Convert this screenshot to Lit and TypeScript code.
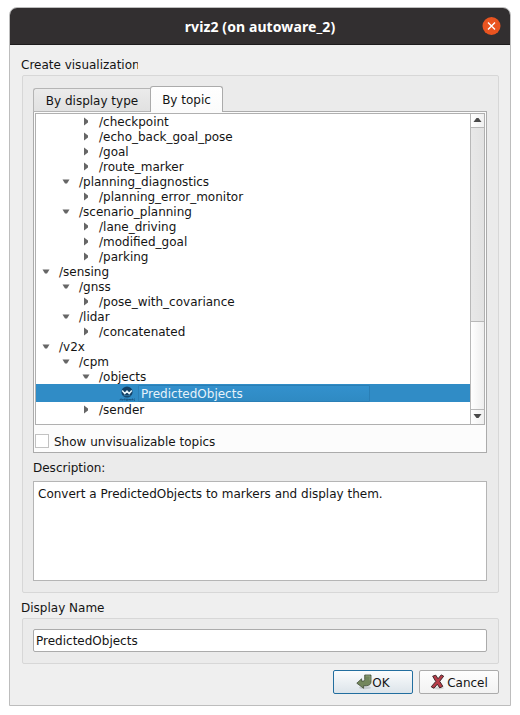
import { LitElement, html, css, svg } from "lit";
import { customElement, property, state } from "lit/decorators.js";
import { classMap } from "lit/directives/class-map.js";

type Node = { label: string; depth: number; kind: "open" | "closed" | "leaf" };

const NODES: Node[] = [
  { label: "/checkpoint", depth: 2, kind: "closed" },
  { label: "/echo_back_goal_pose", depth: 2, kind: "closed" },
  { label: "/goal", depth: 2, kind: "closed" },
  { label: "/route_marker", depth: 2, kind: "closed" },
  { label: "/planning_diagnostics", depth: 1, kind: "open" },
  { label: "/planning_error_monitor", depth: 2, kind: "closed" },
  { label: "/scenario_planning", depth: 1, kind: "open" },
  { label: "/lane_driving", depth: 2, kind: "closed" },
  { label: "/modified_goal", depth: 2, kind: "closed" },
  { label: "/parking", depth: 2, kind: "closed" },
  { label: "/sensing", depth: 0, kind: "open" },
  { label: "/gnss", depth: 1, kind: "open" },
  { label: "/pose_with_covariance", depth: 2, kind: "closed" },
  { label: "/lidar", depth: 1, kind: "open" },
  { label: "/concatenated", depth: 2, kind: "closed" },
  { label: "/v2x", depth: 0, kind: "open" },
  { label: "/cpm", depth: 1, kind: "open" },
  { label: "/objects", depth: 2, kind: "open" },
  { label: "PredictedObjects", depth: 3, kind: "leaf" },
  { label: "/sender", depth: 2, kind: "closed" },
];

@customElement("topic-row")
export class TopicRow extends LitElement {
  @property({ attribute: false }) node!: Node;

  static styles = css`
    :host { display: block; }
    .row { display: flex; align-items: center; height: 15px; line-height: 15px; white-space: pre; }
    .arrow { flex: none; width: 20px; height: 15px; margin-right: 3px; }
    .label { padding-top: 2px; }
    .leaf { height: 18px; line-height: 18px; background: #308cc6; color: #e6f2fa; }
    .logo { flex: none; width: 16px; height: 16px; margin: 2px 3px 0 23px; }
    .current { box-sizing: border-box; width: 232px; height: 17px; margin-top: 1px; line-height: 16px; padding-left: 2px;
      border: 1px solid #2a7fb6; border-radius: 1px; background: linear-gradient(#3391cd, #2f8ac3); }
  `;

  render() {
    const n = this.node;
    const indent = `padding-left:${n.depth * 20}px`;
    if (n.kind === "leaf") {
      return html`<div class="row leaf" style=${indent}>
        <svg class="logo" viewBox="0 0 16 16">
          <circle cx="8" cy="6" r="5.6" fill="#123f64" />
          <path d="M3.2 4.6 5.8 7.6 8 5.2 10.2 7.6 12.8 4.6" fill="none" stroke="#e4f5fb" stroke-width="1.5" />
          <path d="M4.5 9.7h7" stroke="#2d78a7" stroke-width="1" />
          <path d="M.5 14.3 2 12.7v1.8M3 13v1h1.2v-1M5 13h1.5M5.8 13v1.5M7.2 13.2h1.5v1.1H7.2zM9.5 13l.6 1.3.7-1.3.7 1.3.6-1.3M13 14.4V13h1v1.4M15 13h.9M15 14.4h.9" fill="none" stroke="#174f78" stroke-width=".8" />
        </svg>
        <div class="current">${n.label}</div>
      </div>`;
    }
    return html`<div class="row" style=${indent}>
      <svg class="arrow" viewBox="0 0 20 15">
        ${n.kind === "open"
          ? svg`<path d="M6.5 5.5h7l-2.5 4H9z" fill="#666" />`
          : svg`<path d="M8 3.5v8l4-3v-2z" fill="#666" />`}
      </svg><span class="label">${n.label}</span>
    </div>`;
  }
}

@customElement("app-root")
export class AppRoot extends LitElement {
  @state() private tab = 1;

  static styles = css`
    :host { display: block; width: 520px; height: 715px; box-sizing: border-box; padding: 7px 9px 9px; background: #fff;
      font: 12px/15px "DejaVu Sans", sans-serif; color: #141414; overflow: hidden; }
    * { box-sizing: border-box; }
    .window { width: 502px; height: 699px; border: 1px solid #bdbdbd; border-radius: 8px 8px 0 0; background: #efefef;
      display: flex; flex-direction: column; overflow: hidden; }
    .title { flex: none; height: 37px; background: #322f30; border-bottom: 1px solid #1d1b1c; display: grid;
      grid-template-columns: 28px 1fr 28px; align-items: center; text-align: center; color: #fff; }
    .title span { grid-column: 2; font: 700 14px/20px "Noto Sans", sans-serif; letter-spacing: .1px; white-space: pre; margin-top: 1px; }
    .title svg { width: 19px; height: 19px; }
    .body { flex: 1; display: flex; flex-direction: column; padding: 13px 11px 11px 11px; }
    .heading { height: 15px; flex: none; }
    .heading.clip { width: 117px; overflow: hidden; white-space: nowrap; }
    .group { margin-left: 1px; border: 1px solid #d7d7d7; border-radius: 2px; background: #ebebeb; padding: 0 11px 0 10px; }
    .main { height: 518px; margin-top: 2px; padding-top: 10px; flex: none; }
    .tabs { display: flex; align-items: flex-end; height: 26px; margin-bottom: -1px; position: relative; }
    .tab { height: 24px; width: 117px; border: 1px solid #b5b5b5; border-right: 0; border-radius: 3px 0 0 0; padding-top: 5px;
      background: linear-gradient(#ebebeb, #e1e1e1); text-align: center; white-space: nowrap; }
    .tab.active { height: 26px; width: 73px; background: linear-gradient(#fff, #fbfbfb); border: 1px solid #ababab;
      border-bottom: 0; border-radius: 3px 3px 0 0; padding-top: 6px; }
    .pane { height: 342px; border: 1px solid #ababab; background: #fcfcfc; padding: 1px; }
    .tree { height: 312px; width: 450px; border: 1px solid #b0b0b0; background: #fff; display: flex; }
    .rows { flex: 1; min-width: 0; overflow: hidden; }
    .bar { width: 14px; flex: none; display: flex; flex-direction: column; border-left: 1px solid #b8b8b8; }
    .step { height: 14px; background: linear-gradient(90deg, #fff, #f0f0f0); display: block; width: 13px; }
    .step.up { height: 13px; }
    .thumb { height: 195px; border: solid #b8b8b8; border-width: 1px 0; background: linear-gradient(90deg, #e8e8e8, #e2e2e2); }
    .groove { flex: 1; border-bottom: 1px solid #b8b8b8; background: linear-gradient(90deg, #fff, #eee); }
    .check { display: flex; align-items: center; gap: 5px; height: 14px; margin-top: 9px; white-space: nowrap; }
    .check span { padding-top: 2px; }
    .box { width: 14px; height: 14px; border: 1px solid #c2c2c2; background: #fff; }
    .desc { height: 15px; margin-top: 8px; }
    .text { height: 100px; margin-top: 5px; border: 1px solid #b5b5b5; background: #fff; padding: 5px 4px; white-space: nowrap; }
    .name { margin-top: 8px; }
    .small { height: 46px; margin-top: 2px; padding-top: 10px; flex: none; }
    .input { height: 23px; border: 1px solid #ababab; border-radius: 2px; background: #fff; padding: 4px 2px; }
    .buttons { display: flex; justify-content: flex-end; gap: 6px; margin-top: 6px; }
    .button { width: 80px; height: 24px; display: flex; align-items: center; justify-content: center;
      border: 1px solid #ababab; border-radius: 2px; background: linear-gradient(#fdfdfd, #f2f2f2); }
    .button span { padding-top: 2px; }
    .button.ok { border-color: #226e9f; background: linear-gradient(#fbfcfd, #dce4ea); }
    .button svg { width: 16px; height: 16px; flex: none; }
    .cancel svg { margin-right: 1px; }
  `;

  render() {
    return html`
      <div class="window">
        <div class="title">
          <span>rviz2 (on autoware_2)</span>
          <svg viewBox="0 0 19 19"><circle cx="9.5" cy="9" r="9" fill="#e95420" />
            <path d="M6 5.5l7 7M13 5.5l-7 7" stroke="#fff" stroke-width="1.4" /></svg>
        </div>
        <div class="body">
          <div class="heading clip">Create visualization</div>
          <div class="group main">
            <div class="tabs">
              ${["By display type", "By topic"].map((t, i) => html`
                <div class=${classMap({ tab: true, active: this.tab === i })} @click=${() => (this.tab = i)}>${t}</div>`)}
            </div>
            <div class="pane">
              <div class="tree">
                <div class="rows">${NODES.map((n) => html`<topic-row .node=${n}></topic-row>`)}</div>
                <div class="bar">
                  <svg class="step up" viewBox="0 0 13 13"><path d="M2.5 8h8l-3-4h-2z" fill="#4a4a4a" /></svg>
                  <div class="thumb"></div>
                  <div class="groove"></div>
                  <svg class="step" viewBox="0 0 13 14"><path d="M2.5 4h8l-3 4h-2z" fill="#4a4a4a" /></svg>
                </div>
              </div>
              <div class="check"><div class="box"></div><span>Show unvisualizable topics</span></div>
            </div>
            <div class="desc">Description:</div>
            <div class="text">Convert a PredictedObjects to markers and display them.</div>
          </div>
          <div class="heading name">Display Name</div>
          <div class="group small"><div class="input">PredictedObjects</div></div>
          <div class="buttons">
            <div class="button ok">
              <svg viewBox="0 0 16 16">
                <ellipse cx="9" cy="13.7" rx="6" ry="1.6" fill="#000" opacity=".12" />
                <path d="M8.7 1H15v6.6q0 3.9-4.6 4.1H7.6v2.6L.8 9.2 5.6 4.8v2.3h1.6q1.5 0 1.5-1.5z" fill="#73875d" stroke="#434f3a" stroke-width=".8" stroke-linejoin="round" />
                <path d="M9.7 2h4.3v4.5" fill="none" stroke="#94a57f" stroke-width=".8" />
              </svg><span>OK</span>
            </div>
            <div class="button cancel">
              <svg viewBox="0 0 16 16">
                <ellipse cx="8" cy="14" rx="6" ry="1.4" fill="#000" opacity=".12" />
                <path d="M2.7 2.2 5.8 1.2 8 4.8 11.2.9l2.5 1.3L9.7 7.3l3.1 5-3 1.6-2.5-3.7-3.3 4-2.8-1.4L5.8 7.5z" fill="#b83c48" stroke="#43272a" stroke-width="1" stroke-linejoin="round" />
              </svg><span>Cancel</span>
            </div>
          </div>
        </div>
      </div>`;
  }
}
